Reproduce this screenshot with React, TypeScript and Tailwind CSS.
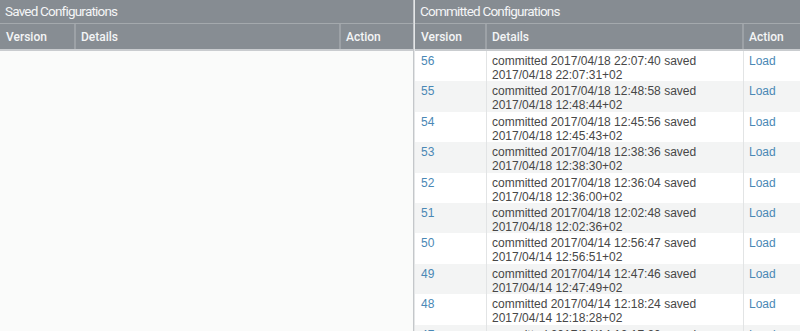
const rows = [
  ["56", "2017/04/18 22:07:40", "2017/04/18 22:07:31+02"],
  ["55", "2017/04/18 12:48:58", "2017/04/18 12:48:44+02"],
  ["54", "2017/04/18 12:45:56", "2017/04/18 12:45:43+02"],
  ["53", "2017/04/18 12:38:36", "2017/04/18 12:38:30+02"],
  ["52", "2017/04/18 12:36:04", "2017/04/18 12:36:00+02"],
  ["51", "2017/04/18 12:02:48", "2017/04/18 12:02:36+02"],
  ["50", "2017/04/14 12:56:47", "2017/04/14 12:56:51+02"],
  ["49", "2017/04/14 12:47:46", "2017/04/14 12:47:49+02"],
  ["48", "2017/04/14 12:18:24", "2017/04/14 12:18:28+02"],
  ["47", "2017/04/14 12:17:20", "2017/04/14 12:17:14+02"],
];

const titleCls =
  "h-[24px] bg-[#868c92] border-b border-[#a4a9ad] pl-[5px] flex items-center text-[13.5px] tracking-[-0.8px] text-[#f4f5f6] font-['Roboto',sans-serif]";
const headCls =
  "h-[27px] bg-[#878d93] border-b-2 border-[#c9cccf] flex text-[12px] font-medium text-[#f4f5f6] font-['Roboto',sans-serif]";
const headCell = "h-full flex items-center border-r-2 border-[#9da2a7]";

const Panel = ({
  title,
  widths,
  children,
}: {
  title: string;
  widths: [string, string, string];
  children?: React.ReactNode;
}) => (
  <div className="flex flex-col">
    <div className={titleCls}>{title}</div>
    <div className={headCls}>
      <div className={`${headCell} ${widths[0]} pl-[6px]`}>Version</div>
      <div className={`${headCell} ${widths[1]} pl-[5px]`}>Details</div>
      <div className="h-full flex items-center flex-1 pl-[5px]">Action</div>
    </div>
    {children}
  </div>
);

export default function App() {
  return (
    <div className="w-[800px] h-[331px] overflow-hidden flex bg-white font-['Liberation_Sans',sans-serif] text-[12px] text-[#474747]">
      <div className="w-[414px] border-r border-[#c4c7ca] bg-[#fafbfa]">
        <Panel title="Saved Configurations" widths={["w-[76px]", "w-[265px]", ""]} />
      </div>
      <div className="flex-1 border-l border-[#e4e6e7]">
        <Panel title="Committed Configurations" widths={["w-[72px]", "w-[257px]", ""]}>
          <div className="flex flex-col">
            {rows.map(([v, c, s], i) => (
              <div
                key={v}
                className={`h-[30.4px] shrink-0 flex ${i % 2 ? "bg-[#f3f4f4]" : "bg-white"}`}
              >
                <div className="w-[72px] border-r border-[#e2e4e5] pl-[6px] pt-[3px] leading-[14px] text-[#4a88b5]">
                  {v}
                </div>
                <div className="w-[257px] border-r border-[#e2e4e5] pl-[5px] pt-[3px] leading-[14px]">
                  committed {c} saved
                  <br />
                  {s}
                </div>
                <div className="flex-1 pl-[5px] pt-[3px] leading-[14px] text-[#4a88b5]">Load</div>
              </div>
            ))}
          </div>
        </Panel>
      </div>
    </div>
  );
}
